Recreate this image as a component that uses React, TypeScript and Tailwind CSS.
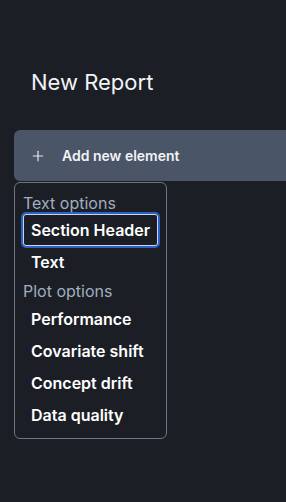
import { Plus } from 'lucide-react'

const textOptions = ['Section Header', 'Text']
const plotOptions = ['Performance', 'Covariate shift', 'Concept drift', 'Data quality']

export default function App() {
  return (
    <div
      className="h-[502px] w-[286px] overflow-hidden bg-[#1b1e25] text-white"
      style={{ fontFamily: 'Inter, "Liberation Sans", sans-serif' }}
    >
      <h1 className="pl-[31px] pt-[65px] text-[22px] font-normal leading-[34px] text-[#f1f3f6]">
        New Report
      </h1>

      <div className="ml-[14px] mt-[31px]">
        <div className="flex h-[51px] items-center rounded-l-[6px] bg-[#4a5568] pl-[16px]">
          <Plus className="size-[16px] text-[#e2e8f0]" strokeWidth={1.75} />
          <span className="ml-[16px] text-[14px] font-semibold text-[#f1f3f6]">
            Add new element
          </span>
        </div>

        {/* menu list */}
        <div className="mt-[1px] w-[153px] rounded-[6px] border border-[#6b7787] bg-[#1b1e25] pb-[7px] pt-[10px]">
          <div className="whitespace-nowrap px-[8px] text-[16px] leading-[20px] text-[#a0aec0]">
            Text options
          </div>
          {textOptions.map((o, i) => (
            <div
              key={o}
              className={
                i === 0
                  ? 'mx-[8px] mt-[1px] whitespace-nowrap rounded-[3px] px-[8px] py-[6px] text-[16px] font-semibold leading-[20px] text-white outline-2 outline-[#2b62c9] shadow-[inset_0_0_0_1px_#c9d6ea]'
                  : 'mx-[8px] whitespace-nowrap px-[8px] py-[6px] text-[16px] font-semibold leading-[20px] text-white'
              }
            >
              {o}
            </div>
          ))}
          <div className="whitespace-nowrap px-[8px] pb-[2px] pt-[3px] text-[16px] leading-[20px] text-[#a0aec0]">
            Plot options
          </div>
          {plotOptions.map((o) => (
            <div
              key={o}
              className="mx-[8px] whitespace-nowrap px-[8px] py-[6px] text-[16px] font-semibold leading-[20px] text-white"
            >
              {o}
            </div>
          ))}
        </div>
      </div>
    </div>
  )
}
